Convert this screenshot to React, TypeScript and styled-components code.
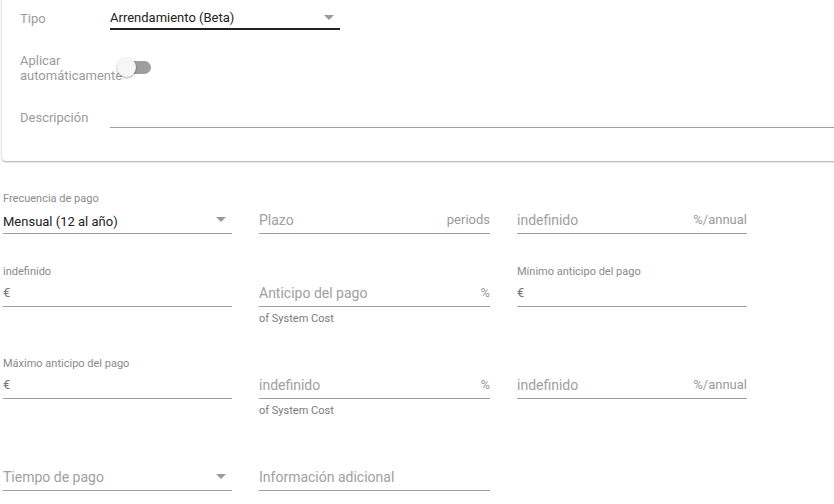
import React from 'react';
import styled, { createGlobalStyle } from 'styled-components';

const GlobalStyle = createGlobalStyle`
  html, body {
    margin: 0;
    padding: 0;
    background: #ffffff;
    overflow: hidden;
  }
  body {
    font-family: Roboto, "Noto Sans", sans-serif;
    -webkit-font-smoothing: antialiased;
  }
`;

const Page = styled.div`
  width: 834px;
  height: 504px;
  overflow: hidden;
`;

const Card = styled.div`
  margin: 0 -30px 0 2px;
  padding: 0 0 33px 18px;
  background: #fff;
  border-radius: 0 0 4px 4px;
  box-shadow: 0 1px 2px rgba(0, 0, 0, 0.32), 0 0 2px rgba(0, 0, 0, 0.1);
`;

const CardRow = styled.div<{ $top: number }>`
  display: flex;
  align-items: center;
  margin-top: ${({ $top }) => $top}px;
`;

const CardLabel = styled.div<{ $pad?: number }>`
  width: 90px;
  flex: none;
  font-size: 13px;
  line-height: 15px;
  color: #9b9b9b;
  padding-top: ${({ $pad }) => $pad ?? 0}px;
`;

const TopSelect = styled.div`
  width: 230px;
  height: 30px;
  box-sizing: border-box;
  padding: 6px 6px 0 0;
  display: flex;
  align-items: center;
  justify-content: space-between;
  border-bottom: 2px solid #222;
  font-size: 13px;
  color: #222;
`;

const Arrow = styled.span`
  width: 0;
  height: 0;
  border-left: 5px solid transparent;
  border-right: 5px solid transparent;
  border-top: 5px solid #9a9a9a;
`;

const ToggleBox = styled.div`
  position: relative;
  width: 35px;
  height: 20px;
  margin-left: 7px;
  flex: none;
`;

const ToggleTrack = styled.div`
  position: absolute;
  left: 3px;
  top: 3px;
  width: 31px;
  height: 13px;
  border-radius: 7px;
  background: #9e9e9e;
`;

const ToggleThumb = styled.div`
  position: absolute;
  left: 0;
  top: 0;
  width: 19px;
  height: 19px;
  border-radius: 50%;
  background: #f6f6f6;
  box-shadow: 0 1px 3px rgba(0, 0, 0, 0.25), 0 1px 2px rgba(0, 0, 0, 0.12);
`;

const DescInput = styled.div`
  flex: 1;
  height: 28px;
  box-sizing: border-box;
  border-bottom: 1px solid #9e9e9e;
`;

const Grid = styled.div`
  display: grid;
  grid-template-columns: 229px 231px 230px;
  column-gap: 27px;
  row-gap: 31px;
  align-items: start;
  margin: 31px 0 0 3px;
`;

const FieldWrap = styled.div`
  display: flex;
  flex-direction: column;
`;

const SmallLabel = styled.div`
  height: 14px;
  font-size: 11px;
  line-height: 14px;
  color: #8a8a8a;
  white-space: nowrap;
`;

const InputRow = styled.div`
  height: 28px;
  box-sizing: border-box;
  display: flex;
  align-items: center;
  justify-content: space-between;
  border-bottom: 1px solid #9e9e9e;
`;

const Value = styled.span<{ $kind: 'value' | 'placeholder' | 'prefix' }>`
  font-size: ${({ $kind }) => ($kind === 'placeholder' ? 14 : 13)}px;
  color: ${({ $kind }) =>
    $kind === 'value' ? '#222' : $kind === 'prefix' ? '#777' : '#a0a0a0'};
  padding-top: ${({ $kind }) => ($kind === 'value' ? 3 : 0)}px;
`;

const Adornment = styled.span`
  font-size: 13px;
  color: #9a9a9a;
`;

const SelectArrow = styled(Arrow)`
  margin-right: 6px;
`;

const Helper = styled.div`
  margin-top: 5px;
  height: 14px;
  font-size: 11px;
  line-height: 14px;
  color: #7a7a7a;
`;

type FieldDef = {
  label?: string;
  text: string;
  kind: 'value' | 'placeholder' | 'prefix';
  suffix?: string;
  select?: boolean;
  helper?: string;
};

const fields: FieldDef[] = [
  { label: 'Frecuencia de pago', text: 'Mensual (12 al año)', kind: 'value', select: true },
  { text: 'Plazo', kind: 'placeholder', suffix: 'periods' },
  { text: 'indefinido', kind: 'placeholder', suffix: '%/annual' },
  { label: 'indefinido', text: '€', kind: 'prefix' },
  { text: 'Anticipo del pago', kind: 'placeholder', suffix: '%', helper: 'of System Cost' },
  { label: 'Mínimo anticipo del pago', text: '€', kind: 'prefix' },
  { label: 'Máximo anticipo del pago', text: '€', kind: 'prefix' },
  { text: 'indefinido', kind: 'placeholder', suffix: '%', helper: 'of System Cost' },
  { text: 'indefinido', kind: 'placeholder', suffix: '%/annual' },
  { text: 'Tiempo de pago', kind: 'placeholder', select: true },
  { text: 'Información adicional', kind: 'placeholder' },
];

const Field: React.FC<{ f: FieldDef }> = ({ f }) => (
  <FieldWrap>
    <SmallLabel>{f.label ?? ''}</SmallLabel>
    <InputRow>
      <Value $kind={f.kind}>{f.text}</Value>
      {f.suffix && <Adornment>{f.suffix}</Adornment>}
      {f.select && <SelectArrow />}
    </InputRow>
    {f.helper && <Helper>{f.helper}</Helper>}
  </FieldWrap>
);

export default function App() {
  return (
    <Page>
      <GlobalStyle />
      <Card>
        <CardRow $top={0}>
          <CardLabel $pad={6}>Tipo</CardLabel>
          <TopSelect>
            <span>Arrendamiento (Beta)</span>
            <Arrow />
          </TopSelect>
        </CardRow>
        <CardRow $top={23}>
          <CardLabel>Aplicar automáticamente</CardLabel>
          <ToggleBox>
            <ToggleTrack />
            <ToggleThumb />
          </ToggleBox>
        </CardRow>
        <CardRow $top={17}>
          <CardLabel $pad={6}>Descripción</CardLabel>
          <DescInput />
        </CardRow>
      </Card>
      <Grid>
        {fields.map((f, i) => (
          <Field key={i} f={f} />
        ))}
      </Grid>
    </Page>
  );
}
